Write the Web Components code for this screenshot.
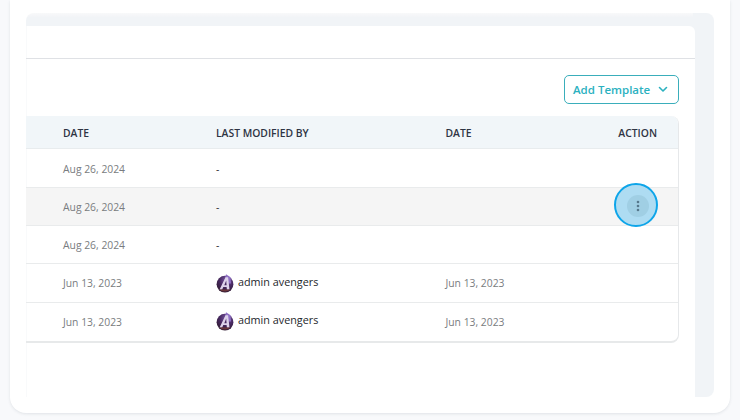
<!DOCTYPE html>
<html>
<head>
<meta charset="utf-8">
<title>Templates</title>
<style>
  html, body { margin: 0; height: 420px; overflow: hidden; background: #f8f9fb; }
  body { font-family: "Open Sans", "Liberation Sans", sans-serif; }
</style>
</head>
<body>
<app-card>
  <tab-panel>
    <panel-toolbar label="Add Template"></panel-toolbar>
    <template-table>
      <head-row><span>DATE</span><span>LAST MODIFIED BY</span><span>DATE</span><span>ACTION</span></head-row>
      <data-row first><span>Aug 26, 2024</span><span>-</span><span></span></data-row>
      <data-row active><span>Aug 26, 2024</span><span>-</span><span></span><row-action></row-action></data-row>
      <data-row style="height: 38px"><span>Aug 26, 2024</span><span>-</span><span></span></data-row>
      <data-row style="height: 38.6px"><span>Jun 13, 2023</span><user-chip>admin avengers</user-chip><span>Jun 13, 2023</span></data-row>
      <data-row style="height: 38.6px"><span>Jun 13, 2023</span><user-chip>admin avengers</user-chip><span>Jun 13, 2023</span></data-row>
    </template-table>
  </tab-panel>
</app-card>

<script>
function define(name, css, html, setup) {
  customElements.define(name, class extends HTMLElement {
    constructor() {
      super();
      this.attachShadow({ mode: 'open' });
      this.shadowRoot.innerHTML = `<style>${css}</style>${html}`;
    }
    connectedCallback() {
      if (setup) setup(this);
    }
  });
}

define('app-card', `
  :host {
    display: block;
    box-sizing: border-box;
    width: 720px;
    height: 413px;
    margin-left: 10px;
    padding: 13px 16px 0;
    background: #fff;
    border-radius: 0 0 16px 16px;
    box-shadow: 0 1px 3px rgba(60, 70, 90, .12);
  }
`, `<slot></slot>`);

define('tab-panel', `
  :host {
    display: block;
    box-sizing: border-box;
    height: 384px;
    padding: 13px 19px 0 0;
    border-radius: 8px 8px 8px 0;
    background: linear-gradient(#f8f9fa, #f2f4f7) top left / calc(100% - 21px) 4px no-repeat, #f1f4f7;
    overflow: hidden;
  }
  .inner {
    height: 100%;
    background: #fff;
    border-radius: 0 6px 0 0;
    box-shadow: inset 1px 0 0 #f9fafb;
  }
  .tabs {
    height: 32px;
    border-bottom: 1px solid #dfe1e5;
  }
`, `<div class="inner"><div class="tabs"></div><slot></slot></div>`);

define('panel-toolbar', `
  :host {
    display: flex;
    justify-content: flex-end;
    padding: 16px 16px 12px 0;
  }
  button {
    box-sizing: border-box;
    display: flex;
    align-items: center;
    gap: 8px;
    width: 115px;
    height: 29px;
    padding: 0 0 0 8px;
    background: #fff;
    border: 1px solid #3aaebb;
    border-radius: 5px;
    color: #2bb1bf;
    font: 600 11.5px "Open Sans", sans-serif;
  }
  svg { width: 10px; height: 7px; }
`, `<button><span id="t"></span><svg viewBox="0 0 10 7"><path d="M1.5 1.5 5 5l3.5-3.5" fill="none" stroke="#2bb1bf" stroke-width="1.6" stroke-linecap="round" stroke-linejoin="round"/></svg></button>`,
  el => { el.shadowRoot.getElementById('t').textContent = el.getAttribute('label'); });

define('template-table', `
  :host {
    display: block;
    box-sizing: border-box;
    width: 653px;
    border-right: 1px solid #e6e8ea;
    border-bottom: 2px solid #e7e9ea;
    border-radius: 0 8px 8px 0;
    position: relative;
    overflow: hidden;
  }
`, `<slot></slot>`);

const rowColumns = `
  display: grid;
  grid-template-columns: 153px 229.5px 1fr auto;
  align-items: center;
  box-sizing: border-box;
  padding-left: 37px;
  padding-right: 21px;
`;

define('head-row', `
  :host {
    ${rowColumns}
    height: 33px;
    padding-top: 2px;
    background: #f1f6f9;
    border-bottom: 1px solid #e8ecee;
    color: #2e3443;
    font-size: 10.35px;
    font-weight: 600;
  }
`, `<slot></slot>`);

define('data-row', `
  :host {
    ${rowColumns}
    position: relative;
    height: 38.2px;
    border-top: 1px solid #e9ebec;
    color: #797c80;
    font-size: 10.35px;
  }
  :host([first]) { border-top-color: transparent; }
  :host([active]) { background: #f5f5f5; z-index: 1; }
  ::slotted(span:nth-child(2)) { color: #24262b; }
`, `<slot></slot>`);

define('row-action', `
  :host {
    position: absolute;
    right: 20px;
    top: -5px;
    box-sizing: border-box;
    width: 44px;
    height: 44px;
    border: 2px solid #0ea5e9;
    border-radius: 50%;
    background: #aedcf2;
  }
  .dot {
    position: absolute;
    left: 11px;
    top: 10px;
    width: 22px;
    height: 22px;
    display: flex;
    align-items: center;
    justify-content: center;
    border-radius: 50%;
    background: #a0cfe4;
  }
  svg { width: 4px; height: 12px; }
`, `<div class="dot"><svg viewBox="0 0 4 12"><g fill="#56788c"><circle cx="2" cy="2" r="1.3"/><circle cx="2" cy="6" r="1.3"/><circle cx="2" cy="10" r="1.3"/></g></svg></div>`);

define('user-chip', `
  :host {
    display: flex;
    align-items: flex-start;
    gap: 4px;
    color: #24262b;
    font-size: 10.8px;
    font-weight: 500;
    line-height: 15px;
  }
  svg { flex: none; width: 18px; height: 19px; }
`, `<svg viewBox="0 0 18 19">
    <defs>
      <radialGradient id="g" cx=".6" cy=".25" r=".85">
        <stop offset="0" stop-color="#7d5aa8"/><stop offset=".5" stop-color="#46285f"/><stop offset="1" stop-color="#2a1826"/>
      </radialGradient>
    </defs>
    <circle cx="9" cy="10.2" r="8.4" fill="url(#g)"/>
    <path d="M10 .3 14.6 3.2 15 9.5H8z" fill="#8f70c4"/>
    <path d="M9.5 3.2h2.6l1.4 12.2h-2.6l-.3-2.3H7.3l-1.1 2.3H3.6z" fill="#ddd2ea"/>
    <path d="M10.2 6.6l.4 4.6H8.3z" fill="#46285f"/>
    <path d="M3.4 15.4a8.4 8.4 0 0 0 11.2.1H3.4z" fill="#7d3f38" opacity=".75"/>
  </svg><span><slot></slot></span>`);
</script>
</body>
</html>
